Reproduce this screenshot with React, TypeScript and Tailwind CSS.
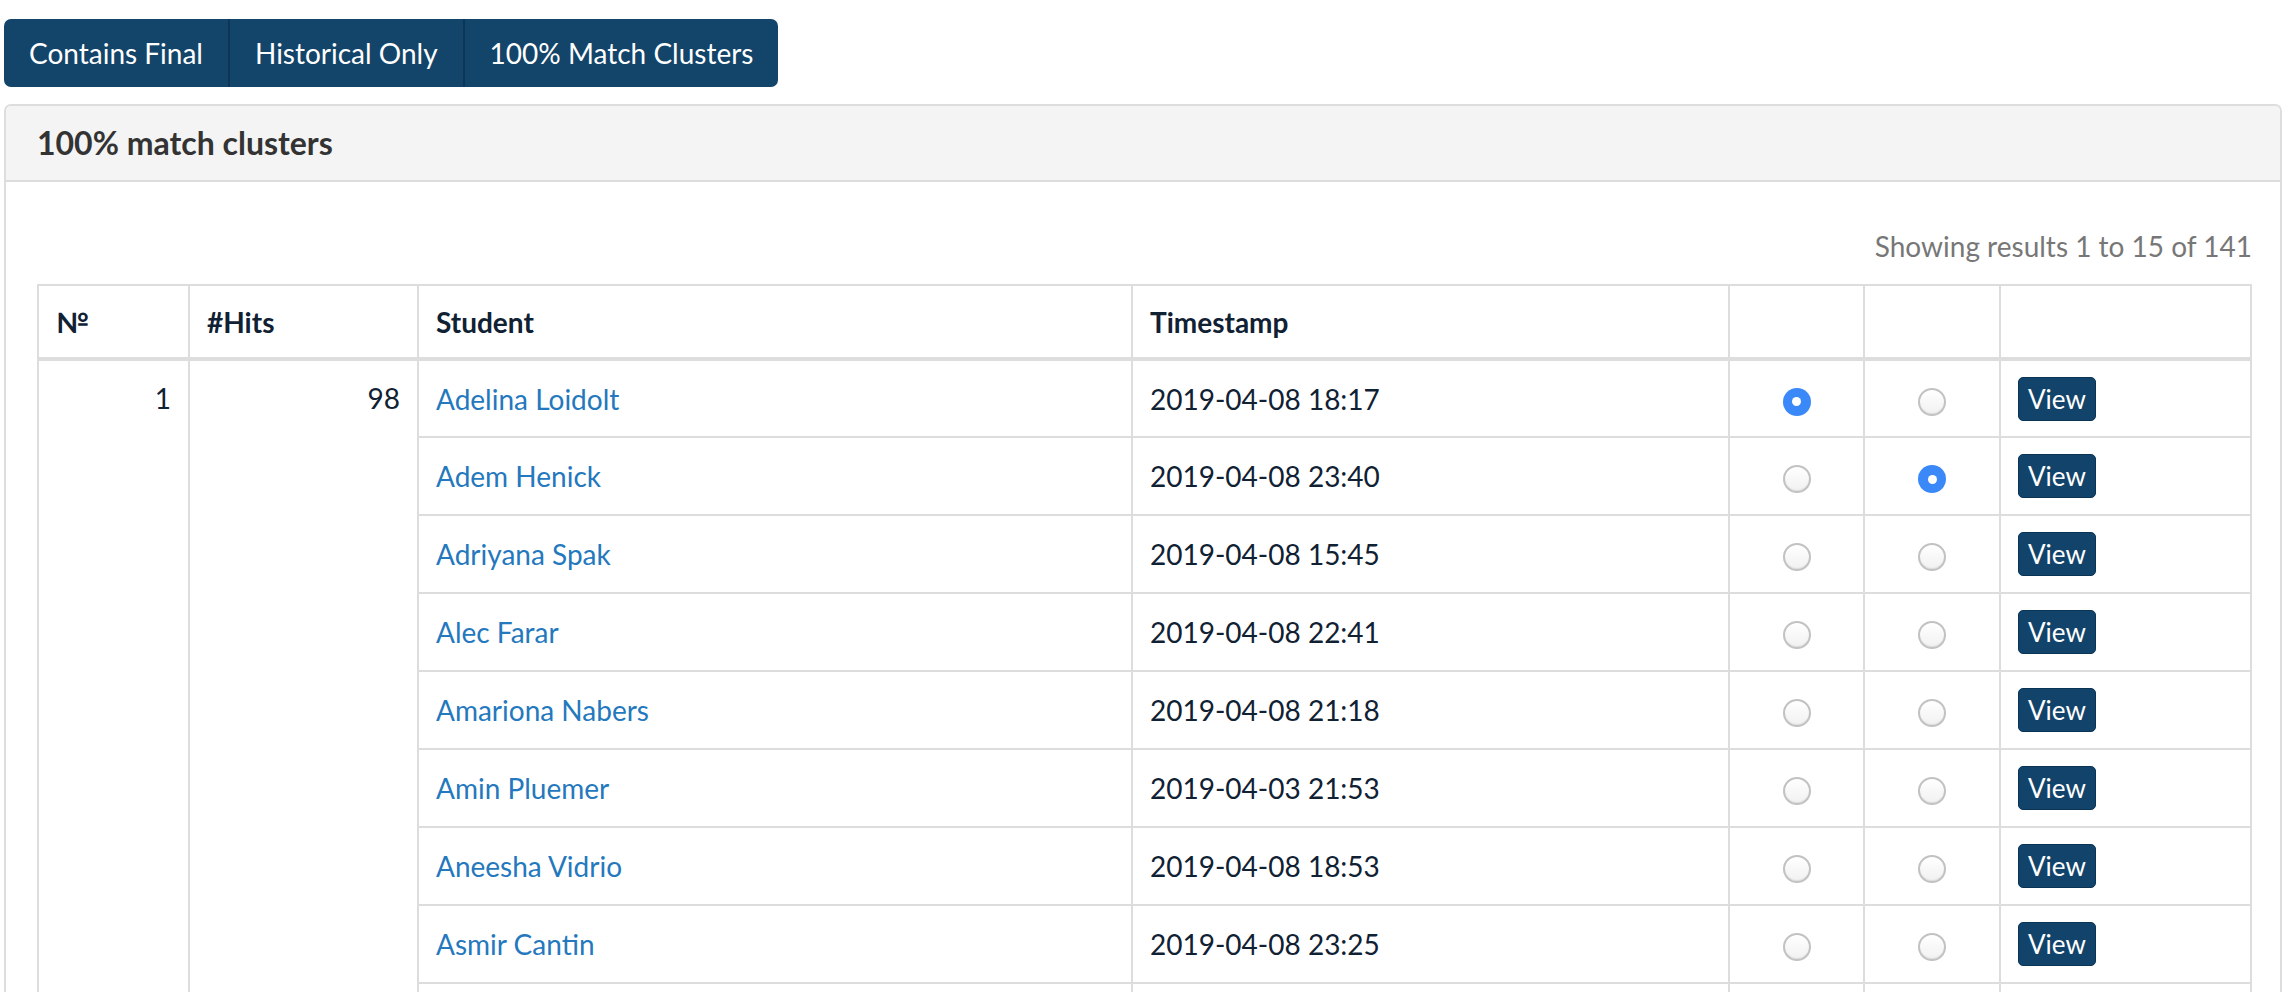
import React from 'react';

type Row = { name: string; time: string; pick: 0 | 1 | 2 };

const rows: Row[] = [
  { name: 'Adelina Loidolt', time: '2019-04-08 18:17', pick: 1 },
  { name: 'Adem Henick', time: '2019-04-08 23:40', pick: 2 },
  { name: 'Adriyana Spak', time: '2019-04-08 15:45', pick: 0 },
  { name: 'Alec Farar', time: '2019-04-08 22:41', pick: 0 },
  { name: 'Amariona Nabers', time: '2019-04-08 21:18', pick: 0 },
  { name: 'Amin Pluemer', time: '2019-04-03 21:53', pick: 0 },
  { name: 'Aneesha Vidrio', time: '2019-04-08 18:53', pick: 0 },
  { name: 'Asmir Cantin', time: '2019-04-08 23:25', pick: 0 },
  { name: 'Bettina Oakes', time: '2019-04-08 20:02', pick: 0 },
  { name: 'Brayden Lusk', time: '2019-04-08 19:37', pick: 0 },
];

const Radio = ({ checked }: { checked: boolean }) =>
  checked ? (
    <span className="inline-flex items-center justify-center w-[28px] h-[28px] rounded-full bg-[#3b89f8] align-middle">
      <span className="w-[9px] h-[9px] rounded-full bg-white" />
    </span>
  ) : (
    <span className="inline-block w-[28px] h-[28px] rounded-full border-2 border-[#c2c2c2] bg-gradient-to-b from-white to-[#f1f1f1] shadow-[inset_0_-1px_1px_rgba(0,0,0,0.08)] align-middle" />
  );

const td = 'border-2 border-[#dddddd] px-[17px] py-0 h-[78px] leading-[34px] align-middle';
const th = 'border-2 border-b-4 border-[#dddddd] px-[17px] py-0 h-[74px] leading-[34px] align-middle';

export default function App() {
  return (
    <div className="min-h-screen bg-white pl-[4px] pt-[19px] font-[family-name:Lato,sans-serif] text-[28px] text-[#0f2133]">
      {/* Filter buttons */}
      <div className="inline-flex h-[68px] rounded-[7px] overflow-hidden bg-[#134469] text-white">
        <button className="px-[25px] border-r-2 border-[#0d3656]">Contains Final</button>
        <button className="px-[25px] border-r-2 border-[#0d3656]">Historical Only</button>
        <button className="px-[25px]">100% Match Clusters</button>
      </div>

      {/* Panel */}
      <div className="mt-[17px] mr-[2px] border-2 border-[#dddddd] rounded-[7px] overflow-hidden">
        <div className="h-[76px] flex items-center px-[31px] bg-[#f4f4f4] border-b-2 border-[#dddddd]">
          <h3 className="font-bold text-[32px] text-[#333333]">100% match clusters</h3>
        </div>
        <div className="pl-[31px] pr-[28px] pt-[47px]">
          <p className="text-right text-[#777777] leading-[34px] mb-[21px]">Showing results 1 to 15 of 141</p>
          <table className="w-full table-fixed border-collapse border-2 border-[#dddddd]">
            <colgroup>
              <col className="w-[151px]" />
              <col className="w-[229px]" />
              <col className="w-[714px]" />
              <col className="w-[597px]" />
              <col className="w-[135px]" />
              <col className="w-[136px]" />
              <col />
            </colgroup>
            <thead>
              <tr className="text-left font-bold">
                <th className={th}>№</th>
                <th className={th}>#Hits</th>
                <th className={th}>Student</th>
                <th className={th}>Timestamp</th>
                <th className={th} />
                <th className={th} />
                <th className={th} />
              </tr>
            </thead>
            <tbody>
              {rows.map((r, i) => (
                <tr key={r.name}>
                  {i === 0 && (
                    <>
                      <td rowSpan={rows.length} className="border-2 border-[#dddddd] px-[17px] pt-[20px] leading-[34px] text-right align-top">1</td>
                      <td rowSpan={rows.length} className="border-2 border-[#dddddd] px-[17px] pt-[20px] leading-[34px] text-right align-top">98</td>
                    </>
                  )}
                  <td className={td}>
                    <a href="#" className="text-[#2478bd]">{r.name}</a>
                  </td>
                  <td className={td}>{r.time}</td>
                  <td className={`${td} text-center`}>
                    <Radio checked={r.pick === 1} />
                  </td>
                  <td className={`${td} text-center`}>
                    <Radio checked={r.pick === 2} />
                  </td>
                  <td className={td}>
                    <button className="h-[44px] px-[9px] rounded-[5px] bg-[#12446b] border border-[#0b3454] text-white text-[26px] leading-[40px] align-middle">
                      View
                    </button>
                  </td>
                </tr>
              ))}
            </tbody>
          </table>
        </div>
      </div>
    </div>
  );
}
